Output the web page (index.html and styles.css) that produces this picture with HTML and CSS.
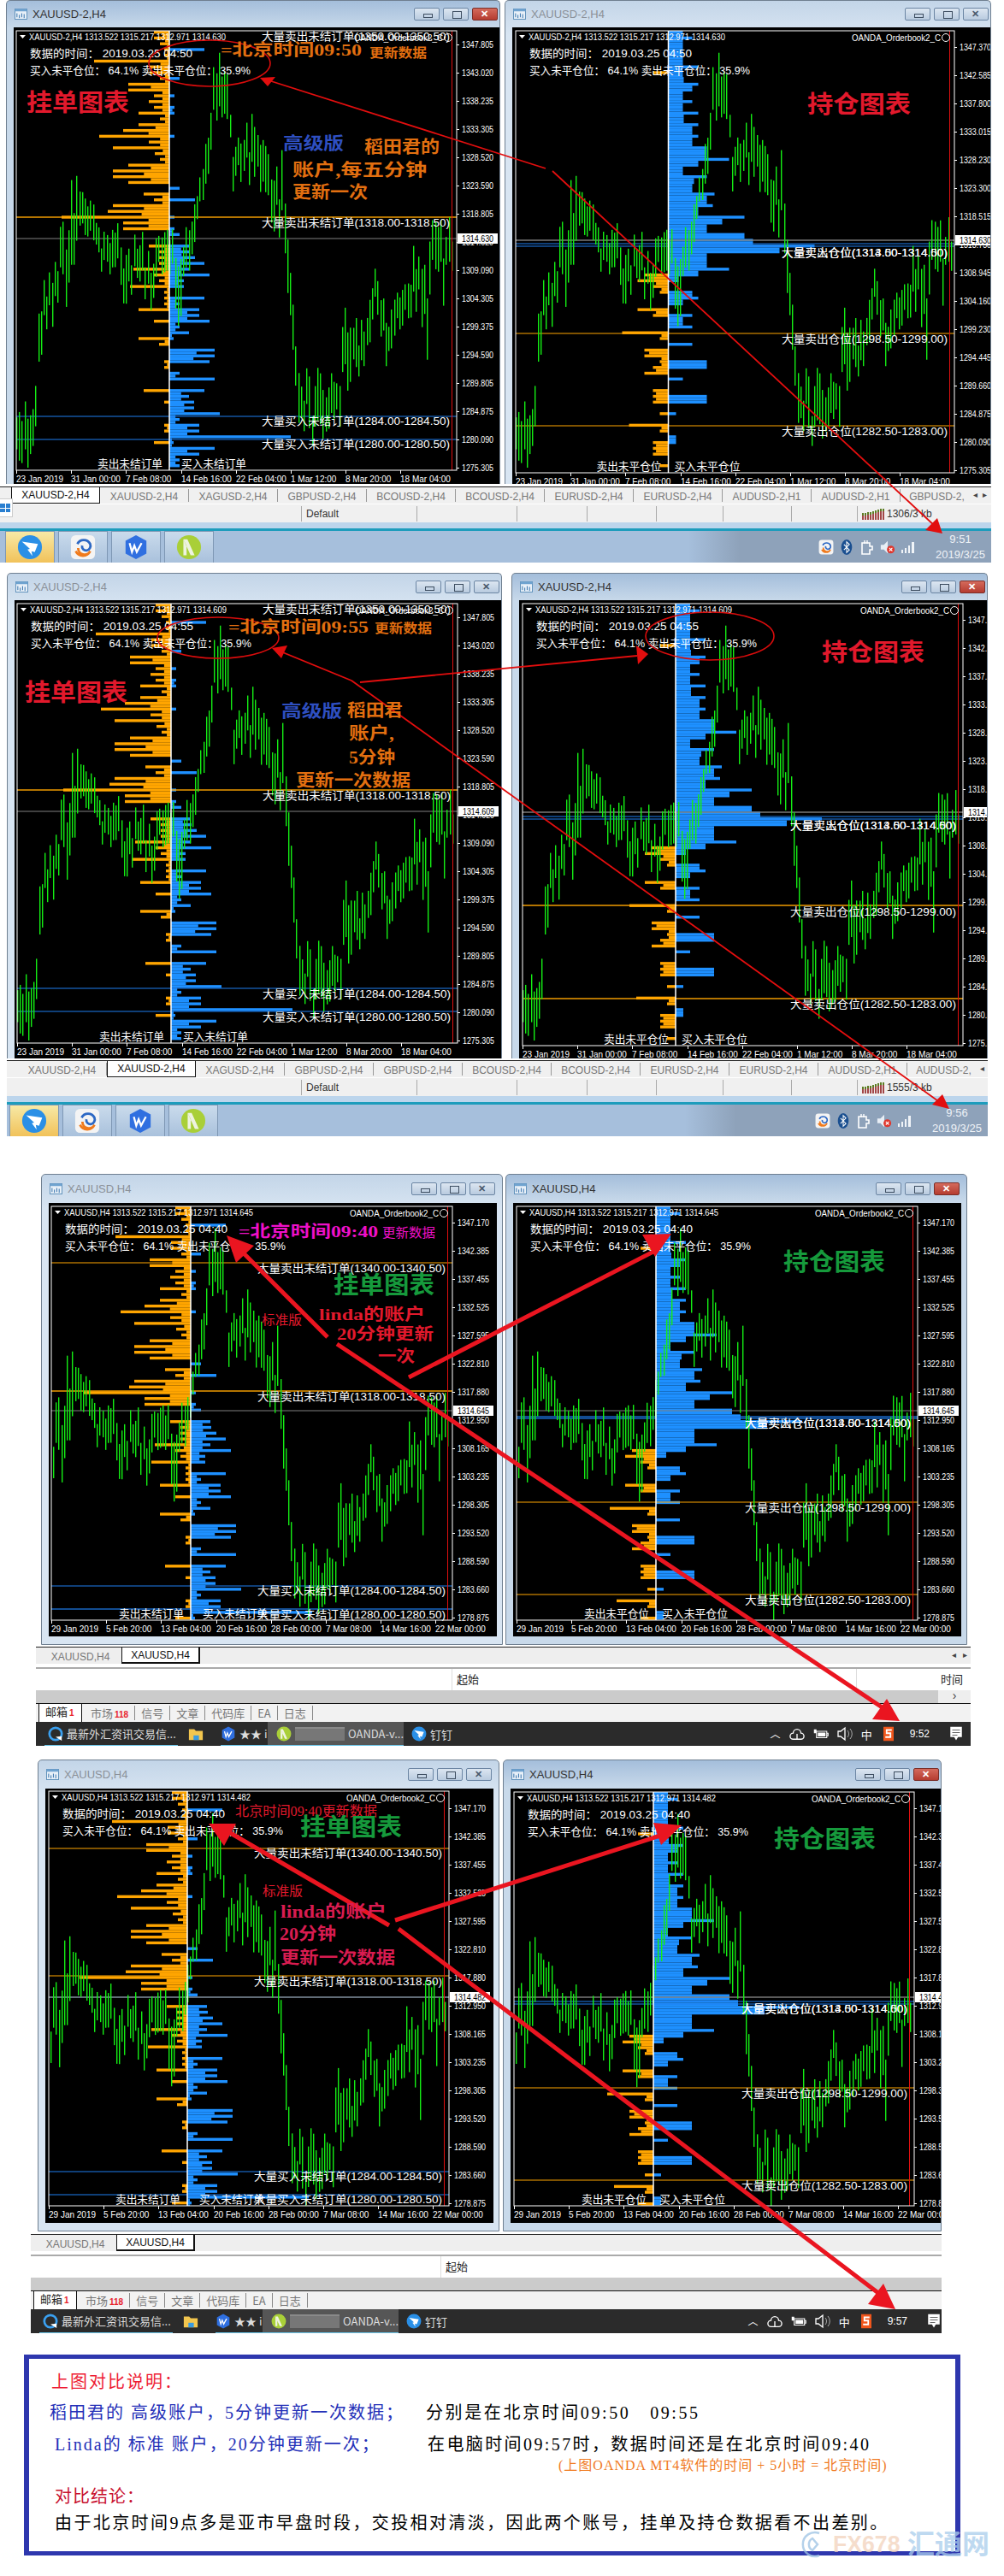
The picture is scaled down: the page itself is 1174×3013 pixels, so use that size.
FILE: index.html
```html
<!DOCTYPE html>
<html lang="zh-CN">
<head>
<meta charset="UTF-8" />
<meta name="viewport" content="width=device-width, initial-scale=1" />
<title>OANDA Orderbook 对比</title>
<link rel="stylesheet" href="styles.css">
</head>
<body>
  <!-- icons used by the taskbars and title bars -->
  <svg class="sprite" aria-hidden="true">
    <symbol id="i-win" viewBox="0 0 16 14">
      <rect x="0.5" y="0.5" width="15" height="13" fill="#e8f0f8" stroke="#5b8db8"/>
      <rect x="0.5" y="0.5" width="15" height="3" fill="#6fa3d0"/>
      <path d="M3 11V6M6 12V8M9 11V6M12 12V7" stroke="#2a6aa8" fill="none"/>
    </symbol>
    <symbol id="i-ding" viewBox="0 0 32 32">
      <circle cx="16" cy="16" r="15" fill="#2a8fe6"/>
      <path d="M6 9l20 3-4 10-4-1 1 6-6-8 3-1z" fill="#fff"/>
    </symbol>
    <symbol id="i-swirl" viewBox="0 0 32 32">
      <rect x="1" y="1" width="30" height="30" rx="6" fill="#f4f4f4"/>
      <path d="M7 21a10 10 0 0 0 18 0 8 8 0 0 1-15-4" fill="none" stroke="#f07a1c" stroke-width="3"/>
      <path d="M9 12a9 9 0 0 1 16 0 6 6 0 0 1-4 8 5 5 0 0 1-6-6" fill="none" stroke="#2d68c4" stroke-width="3"/>
    </symbol>
    <symbol id="i-wps" viewBox="0 0 32 32">
      <path d="M16 1l13 7v16l-13 7-13-7V8z" fill="#2f6fe0"/>
      <path d="M8 11l3 11 3-8 3 8 6-11" fill="none" stroke="#fff" stroke-width="2.4"/>
    </symbol>
    <symbol id="i-n" viewBox="0 0 32 32">
      <circle cx="16" cy="16" r="15" fill="#a9cf38"/>
      <path d="M9 6h5l9 20h-5l-9-20zM9 6v20h4V14z" fill="#eef3e0"/>
    </symbol>
    <symbol id="i-plug" viewBox="0 0 16 18">
      <path d="M2 4h9v4h3v4h-3v5H2z" fill="none" stroke="#fff" stroke-width="1.6"/>
      <path d="M5 1v4M8 1v4" stroke="#fff" stroke-width="1.4"/>
    </symbol>
    <symbol id="i-bt" viewBox="0 0 14 20">
      <ellipse cx="7" cy="10" rx="7" ry="10" fill="#1a4f90"/>
      <path d="M3.5 6.5l7 7-3.5 3.5v-14l3.5 3.5-7 7" fill="none" stroke="#fff" stroke-width="1.2"/>
    </symbol>
    <symbol id="i-mute" viewBox="0 0 20 18">
      <path d="M1 6h4l5-5v16l-5-5H1z" fill="#e8eef5"/>
      <circle cx="14" cy="12" r="5" fill="#e0362c"/>
      <path d="M12 10l4 4M16 10l-4 4" stroke="#fff" stroke-width="1.2"/>
    </symbol>
    <symbol id="i-signal" viewBox="0 0 18 14">
      <path d="M1 10h2v4H1zM5 8h2v6H5zM9 5h2v9H9zM13 1h3v13h-3z" fill="#f0f4f8"/>
    </symbol>
    <symbol id="i-meter" viewBox="0 0 26 14">
      <path d="M1 6v8M4 6v8M7 5v9M10 5v9M13 4v10M16 3v11M19 2v12M22 1v13M25 1v13" stroke="#8f1d1d" stroke-width="1.6"/>
      <path d="M1 6v3M4 6v3M7 5v3M10 5v3M13 4v3M16 3v3M19 2v3M22 1v3M25 1v3" stroke="#4d8c1c" stroke-width="1.6"/>
    </symbol>
    <symbol id="i-folder" viewBox="0 0 20 18">
      <path d="M1 3h7l2 2h9v12H1z" fill="#f3c64e"/>
      <path d="M7 11h7v6H7z" fill="#3a9be0"/>
    </symbol>
    <symbol id="i-qq" viewBox="0 0 20 20">
      <circle cx="10" cy="10" r="8" fill="none" stroke="#3aa0f0" stroke-width="3"/>
      <path d="M10 14l8 5v-6z" fill="#fff"/>
    </symbol>
    <symbol id="i-sogou" viewBox="0 0 20 24">
      <path d="M2 1h16v22H2z" fill="#f0561c"/>
      <path d="M15 6H7v5h6v6H5" fill="none" stroke="#fff" stroke-width="2.4"/>
    </symbol>
    <symbol id="i-tray-note" viewBox="0 0 20 24">
      <path d="M1 1h18v16h-6l-3 5-3-5H1z" fill="#fff"/>
      <path d="M4 6h12M4 10h12M4 14h8" stroke="#333"/>
    </symbol>
    <symbol id="i-cloud" viewBox="0 0 20 18">
      <path d="M5 16a4 4 0 0 1 0-8 5 5 0 0 1 10 0 4 4 0 0 1 0 8zM10 16V9" fill="none" stroke="#fff" stroke-width="1.5"/>
    </symbol>
    <symbol id="i-batt" viewBox="0 0 24 16">
      <path d="M5 4h16v10H5zM21 7h2v4h-2" fill="none" stroke="#fff" stroke-width="1.5"/>
      <path d="M7 6h12v6H7zM1 1h4v6H1z" fill="#fff"/>
    </symbol>
    <symbol id="i-sound" viewBox="0 0 18 18">
      <path d="M1 6h3l5-4v14l-5-4H1z" fill="none" stroke="#fff" stroke-width="1.3"/>
      <path d="M12 5a6 6 0 0 1 0 8M15 3a9 9 0 0 1 0 12" fill="none" stroke="#aaa"/>
    </symbol>
  </svg>

  <!-- 1: 稻田君 09:50 -->
  <section class="screen s1">
    <div class="win-row">
      <div class="win win-left is-active">
        <div class="win-title"><svg class="win-icon"><use href="#i-win"/></svg><span>XAUUSD-2,H4</span>
          <div class="win-btns"><i class="btn btn-min"></i><i class="btn btn-max"></i><i class="btn btn-close"></i></div></div>
        <div class="chart" data-chart="s1o"></div>
      </div>
      <div class="win win-right">
        <div class="win-title"><svg class="win-icon"><use href="#i-win"/></svg><span>XAUUSD-2,H4</span>
          <div class="win-btns"><i class="btn btn-min"></i><i class="btn btn-max"></i><i class="btn btn-x"></i></div></div>
        <div class="chart" data-chart="s1p"></div>
      </div>
    </div>
    <div class="bars">
      <div class="tabs">
        <span class="tab is-current">XAUUSD-2,H4</span><span class="tab">XAUUSD-2,H4</span><span class="tab">XAGUSD-2,H4</span><span class="tab">GBPUSD-2,H4</span><span class="tab">BCOUSD-2,H4</span><span class="tab">BCOUSD-2,H4</span><span class="tab">EURUSD-2,H4</span><span class="tab">EURUSD-2,H4</span><span class="tab">AUDUSD-2,H1</span><span class="tab">AUDUSD-2,H1</span><span class="tab tab-cut">GBPUSD-2,</span><span class="tab-arrows">◂ &nbsp;▸</span>
      </div>
      <div class="status">
        <span class="cell c1"></span><span class="cell c2">Default</span><span class="cell c3"></span><span class="cell c4"></span><span class="cell c5"></span><span class="cell c6"></span><span class="cell c7"></span><span class="cell c8"></span>
        <span class="cell c9"><svg class="meter"><use href="#i-meter"/></svg>1306/3 kb</span>
      </div>
      <div class="strip"></div>
      <div class="taskbar">
        <div class="task-btn is-hot"><svg><use href="#i-ding"/></svg></div>
        <div class="task-btn"><svg><use href="#i-swirl"/></svg></div>
        <div class="task-btn"><svg><use href="#i-wps"/></svg></div>
        <div class="task-btn"><svg><use href="#i-n"/></svg></div>
        <div class="tray">
          <svg class="t20"><use href="#i-swirl"/></svg>
          <svg class="t20"><use href="#i-bt"/></svg>
          <svg class="t20"><use href="#i-plug"/></svg>
          <svg class="t20"><use href="#i-mute"/></svg>
          <svg class="t20"><use href="#i-signal"/></svg>
          <div class="clock"><span>9:51</span><span>2019/3/25</span></div>
        </div>
      </div>
    </div>
    <div class="corner-app"><i></i><i></i><i></i><i></i></div>
    <svg class="marks" width="1174" height="670">
      <ellipse class="ring" cx="245" cy="74" rx="71" ry="27"/>
      <path class="thin" d="M638 197L314 94M646 200L1094 616"/>
      <polygon class="head" points="304,91 322,90 313,101"/>
      <polygon class="head" points="1102,624 1082,620 1096,606"/>
      <text class="tx bold orange" x="258" y="58" textLength="165" lengthAdjust="spacingAndGlyphs">=北京时间09:50</text>
      <text class="tx bold orange small" x="432" y="62" textLength="67" lengthAdjust="spacingAndGlyphs">更新数据</text>
      <text class="tx big red-t" x="31" y="120" textLength="120" lengthAdjust="spacingAndGlyphs">挂单图表</text>
      <text class="tx mid blue-t" x="331" y="168" textLength="71" lengthAdjust="spacingAndGlyphs">高级版</text>
      <text class="tx mid orange" x="426" y="172" textLength="88" lengthAdjust="spacingAndGlyphs">稻田君的</text>
      <text class="tx mid orange" x="342" y="199" textLength="157" lengthAdjust="spacingAndGlyphs">账户,每五分钟</text>
      <text class="tx mid orange" x="342" y="225" textLength="88" lengthAdjust="spacingAndGlyphs">更新一次</text>
      <text class="tx big red-t" x="944" y="122" textLength="121" lengthAdjust="spacingAndGlyphs">持仓图表</text>
    </svg>
  </section>

  <!-- 2: 稻田君 09:55 -->
  <section class="screen s2">
    <div class="win-row">
      <div class="win win-left">
        <div class="win-title"><svg class="win-icon"><use href="#i-win"/></svg><span>XAUUSD-2,H4</span>
          <div class="win-btns"><i class="btn btn-min"></i><i class="btn btn-max"></i><i class="btn btn-x"></i></div></div>
        <div class="chart" data-chart="s2o"></div>
      </div>
      <div class="win win-right is-active">
        <div class="win-title"><svg class="win-icon"><use href="#i-win"/></svg><span>XAUUSD-2,H4</span>
          <div class="win-btns"><i class="btn btn-min"></i><i class="btn btn-max"></i><i class="btn btn-close"></i></div></div>
        <div class="chart" data-chart="s2p"></div>
      </div>
    </div>
    <div class="bars">
      <div class="tabs">
        <span class="tab">XAUUSD-2,H4</span><span class="tab is-current">XAUUSD-2,H4</span><span class="tab">XAGUSD-2,H4</span><span class="tab">GBPUSD-2,H4</span><span class="tab">GBPUSD-2,H4</span><span class="tab">BCOUSD-2,H4</span><span class="tab">BCOUSD-2,H4</span><span class="tab">EURUSD-2,H4</span><span class="tab">EURUSD-2,H4</span><span class="tab">AUDUSD-2,H1</span><span class="tab tab-cut">AUDUSD-2,</span><span class="tab-arrows">◂ &nbsp;▸</span>
      </div>
      <div class="status">
        <span class="cell c1"></span><span class="cell c2">Default</span><span class="cell c3"></span><span class="cell c4"></span><span class="cell c5"></span><span class="cell c6"></span><span class="cell c7"></span><span class="cell c8"></span>
        <span class="cell c9"><svg class="meter"><use href="#i-meter"/></svg>1555/3 kb</span>
      </div>
      <div class="strip"></div>
      <div class="taskbar">
        <div class="task-btn is-hot"><svg><use href="#i-ding"/></svg></div>
        <div class="task-btn"><svg><use href="#i-swirl"/></svg></div>
        <div class="task-btn"><svg><use href="#i-wps"/></svg></div>
        <div class="task-btn"><svg><use href="#i-n"/></svg></div>
        <div class="tray">
          <svg class="t20"><use href="#i-swirl"/></svg>
          <svg class="t20"><use href="#i-bt"/></svg>
          <svg class="t20"><use href="#i-plug"/></svg>
          <svg class="t20"><use href="#i-mute"/></svg>
          <svg class="t20"><use href="#i-signal"/></svg>
          <div class="clock"><span>9:56</span><span>2019/3/25</span></div>
        </div>
      </div>
    </div>
    <svg class="marks" width="1174" height="703">
      <ellipse class="ring" cx="255" cy="76" rx="71" ry="24"/>
      <ellipse class="ring" cx="830" cy="74" rx="75" ry="28"/>
      <path class="thin" d="M411 126L328 92M411 126L1100 620M421 128L745 97"/>
      <polygon class="head" points="318,88 336,85 329,100"/>
      <polygon class="head" points="758,95 744,85 746,107"/>
      <polygon class="head" points="1110,627 1090,622 1102,610"/>
      <text class="tx bold orange" x="267" y="63" textLength="164" lengthAdjust="spacingAndGlyphs">=北京时间09:55</text>
      <text class="tx bold orange small" x="438" y="65" textLength="67" lengthAdjust="spacingAndGlyphs">更新数据</text>
      <text class="tx big red-t" x="29" y="140" textLength="120" lengthAdjust="spacingAndGlyphs">挂单图表</text>
      <text class="tx mid blue-t" x="329" y="162" textLength="71" lengthAdjust="spacingAndGlyphs">高级版</text>
      <text class="tx mid orange" x="406" y="161" textLength="65" lengthAdjust="spacingAndGlyphs">稻田君</text>
      <text class="tx mid orange" x="408" y="188" textLength="53" lengthAdjust="spacingAndGlyphs">账户,</text>
      <text class="tx mid orange" x="408" y="216" textLength="54" lengthAdjust="spacingAndGlyphs">5分钟</text>
      <text class="tx mid orange" x="346" y="243" textLength="134" lengthAdjust="spacingAndGlyphs">更新一次数据</text>
      <text class="tx big red-t" x="961" y="93" textLength="120" lengthAdjust="spacingAndGlyphs">持仓图表</text>
    </svg>
  </section>

  <!-- 3: linda 09:52 -->
  <section class="screen s3">
    <div class="win-row">
      <div class="win win-left">
        <div class="win-title"><svg class="win-icon"><use href="#i-win"/></svg><span>XAUUSD,H4</span>
          <div class="win-btns"><i class="btn btn-min"></i><i class="btn btn-max"></i><i class="btn btn-x"></i></div></div>
        <div class="chart" data-chart="s3o"></div>
      </div>
      <div class="win win-right is-active">
        <div class="win-title"><svg class="win-icon"><use href="#i-win"/></svg><span>XAUUSD,H4</span>
          <div class="win-btns"><i class="btn btn-min"></i><i class="btn btn-max"></i><i class="btn btn-close"></i></div></div>
        <div class="chart" data-chart="s3p"></div>
      </div>
    </div>
    <div class="bars">
      <div class="tabs tabs-short">
        <span class="tab">XAUUSD,H4</span><span class="tab is-current">XAUUSD,H4</span><span class="tab-arrows">◂ &nbsp;&nbsp;▸</span>
      </div>
      <div class="grid-head"><span class="gh-a"></span><span class="gh-b">起始</span><span class="gh-c">时间</span></div>
      <div class="scroll"><span class="scroll-end">›</span></div>
      <div class="panel-tabs">
        <span class="ptab is-current">邮箱<b>1</b></span><span class="ptab">市场<b>118</b></span><span class="ptab">信号</span><span class="ptab">文章</span><span class="ptab">代码库</span><span class="ptab">EA</span><span class="ptab">日志</span>
      </div>
      <div class="darkbar">
        <span class="dk dk-news"><svg><use href="#i-qq"/></svg>最新外汇资讯交易信...</span>
        <span class="dk dk-folder"><svg><use href="#i-folder"/></svg></span>
        <span class="dk dk-star"><svg><use href="#i-wps"/></svg>★★ i</span>
        <span class="dk dk-oanda"><svg><use href="#i-n"/></svg><i class="blur"></i>OANDA-v...</span>
        <span class="dk dk-ding"><svg><use href="#i-ding"/></svg>钉钉</span>
        <div class="dk-tray">
          <span class="caret">︿</span>
          <svg><use href="#i-cloud"/></svg>
          <svg><use href="#i-batt"/></svg>
          <svg><use href="#i-sound"/></svg>
          <span>中</span>
          <svg><use href="#i-sogou"/></svg>
          <span class="dk-time">9:52</span>
          <svg><use href="#i-tray-note"/></svg>
        </div>
      </div>
    </div>
    <svg class="marks" width="1174" height="685">
      <path class="thick" d="M383 191L272 80M394 199L1033 625M478 238L766 90"/>
      <polygon class="head-t" points="265,72 297,84 276,104"/>
      <polygon class="head-t" points="751,71 785,70 766,97"/>
      <polygon class="head-t" points="1037,614 1052,640 1020,638"/>
      <text class="tx bold magenta" x="279" y="67" textLength="163" lengthAdjust="spacingAndGlyphs">=北京时间09:40</text>
      <text class="tx magenta small" x="447" y="69" textLength="62" lengthAdjust="spacingAndGlyphs">更新数据</text>
      <text class="tx big green-t" x="390" y="130" textLength="118" lengthAdjust="spacingAndGlyphs">挂单图表</text>
      <text class="tx red-t small" x="306" y="171" textLength="47" lengthAdjust="spacingAndGlyphs">标准版</text>
      <text class="tx bold red-t" x="373" y="164" textLength="124" lengthAdjust="spacingAndGlyphs">linda的账户</text>
      <text class="tx bold red-t" x="394" y="187" textLength="113" lengthAdjust="spacingAndGlyphs">20分钟更新</text>
      <text class="tx bold red-t" x="442" y="213" textLength="43" lengthAdjust="spacingAndGlyphs">一次</text>
      <text class="tx big green-t" x="916" y="103" textLength="119" lengthAdjust="spacingAndGlyphs">持仓图表</text>
    </svg>
  </section>

  <!-- 4: linda 09:57 -->
  <section class="screen s4">
    <div class="win-row">
      <div class="win win-left">
        <div class="win-title"><svg class="win-icon"><use href="#i-win"/></svg><span>XAUUSD,H4</span>
          <div class="win-btns"><i class="btn btn-min"></i><i class="btn btn-max"></i><i class="btn btn-x"></i></div></div>
        <div class="chart" data-chart="s4o"></div>
      </div>
      <div class="win win-right is-active">
        <div class="win-title"><svg class="win-icon"><use href="#i-win"/></svg><span>XAUUSD,H4</span>
          <div class="win-btns"><i class="btn btn-min"></i><i class="btn btn-max"></i><i class="btn btn-close"></i></div></div>
        <div class="chart" data-chart="s4p"></div>
      </div>
    </div>
    <div class="bars">
      <div class="tabs tabs-short">
        <span class="tab">XAUUSD,H4</span><span class="tab is-current">XAUUSD,H4</span>
      </div>
      <div class="grid-head"><span class="gh-a"></span><span class="gh-b">起始</span></div>
      <div class="scroll"></div>
      <div class="panel-tabs">
        <span class="ptab is-current">邮箱<b>1</b></span><span class="ptab">市场<b>118</b></span><span class="ptab">信号</span><span class="ptab">文章</span><span class="ptab">代码库</span><span class="ptab">EA</span><span class="ptab">日志</span>
      </div>
      <div class="darkbar">
        <span class="dk dk-news"><svg><use href="#i-qq"/></svg>最新外汇资讯交易信...</span>
        <span class="dk dk-folder"><svg><use href="#i-folder"/></svg></span>
        <span class="dk dk-star"><svg><use href="#i-wps"/></svg>★★ i</span>
        <span class="dk dk-oanda"><svg><use href="#i-n"/></svg><i class="blur"></i>OANDA-v...</span>
        <span class="dk dk-ding"><svg><use href="#i-ding"/></svg>钉钉</span>
        <div class="dk-tray">
          <span class="caret">︿</span>
          <svg><use href="#i-cloud"/></svg>
          <svg><use href="#i-batt"/></svg>
          <svg><use href="#i-sound"/></svg>
          <span>中</span>
          <svg><use href="#i-sogou"/></svg>
          <span class="dk-time">9:57</span>
          <svg><use href="#i-tray-note"/></svg>
        </div>
      </div>
    </div>
    <svg class="marks" width="1174" height="680">
      <path class="thick" d="M455 194L266 84M466 198L1035 630M462 188L775 88"/>
      <polygon class="head-t" points="244,75 276,75 262,101"/>
      <polygon class="head-t" points="764,74 797,77 773,100"/>
      <polygon class="head-t" points="1033,613 1047,643 1015,637"/>
      <text class="tx red-t note" x="275" y="60" textLength="166" lengthAdjust="spacingAndGlyphs">北京时间09:40更新数据</text>
      <text class="tx big green-t" x="351" y="79" textLength="119" lengthAdjust="spacingAndGlyphs">挂单图表</text>
      <text class="tx red-t small" x="307" y="154" textLength="47" lengthAdjust="spacingAndGlyphs">标准版</text>
      <text class="tx mid crimson" x="328" y="178" textLength="124" lengthAdjust="spacingAndGlyphs">linda的账户</text>
      <text class="tx mid crimson" x="327" y="204" textLength="66" lengthAdjust="spacingAndGlyphs">20分钟</text>
      <text class="tx mid crimson" x="328" y="232" textLength="134" lengthAdjust="spacingAndGlyphs">更新一次数据</text>
      <text class="tx big green-t" x="905" y="93" textLength="119" lengthAdjust="spacingAndGlyphs">持仓图表</text>
    </svg>
  </section>

  <!-- summary box -->
  <section class="summary">
    <div class="line l1 red-line">上图对比说明&#xFF1A;</div>
    <div class="line l2"><span class="col-a blue-line">稻田君的 高级账户&#xFF0C;5分钟更新一次数据&#xFF1B;</span><span class="col-r">分别是在北京时间09:50&nbsp;&nbsp;&nbsp;09:55</span></div>
    <div class="line l3"><span class="col-b blue-line">Linda的 标准 账户&#xFF0C;20分钟更新一次&#xFF1B;</span><span class="col-s">在电脑时间09:57时&#xFF0C;数据时间还是在北京时间09:40</span></div>
    <div class="line l4">(上图OANDA MT4软件的时间 + 5小时 = 北京时间)</div>
    <div class="line l5">对比结论&#xFF1A;</div>
    <div class="line l6">由于北京时间9点多是亚市早盘时段&#xFF0C;交投相对清淡&#xFF0C;因此两个账号&#xFF0C;挂单及持仓数据看不出差别。</div>
    <div class="watermark">
      <svg width="30" height="32" viewBox="0 0 30 32"><path d="M22 3a14 14 0 1 0 0 26M14 9a8 8 0 0 0 0 14l6-7z" fill="none" stroke="#9cc2e4" stroke-width="2.5"/></svg>
      <span class="wm-fx">FX678</span><span class="wm-cn">汇通网</span>
    </div>
  </section>

  <script src="app.js"></script>
</body>
</html>
```

FILE: styles.css
```css
/* Reset */
* {
  box-sizing: border-box;
}
body {
  margin: 0;
  width: 1174px;
  height: 3013px;
  overflow: hidden;
  background: #fff;
  font-family: "Liberation Sans", "Noto Sans CJK SC", sans-serif;
}
.sprite {
  position: absolute;
  width: 0;
  height: 0;
}

/* Screens */
.screen {
  position: relative;
  width: 1174px;
}
.s1 { height: 670px; }
.s2 { height: 703px; }
.s3 { height: 685px; }
.s4 { height: 696px; }

.win-row {
  display: flex;
}
.s1 .win-row { height: 566px; padding-left: 7px; }
.s2 .win-row { height: 568px; padding-left: 8px; }
.s3 .win-row { height: 551px; padding-left: 48px; }
.s4 .win-row { height: 552px; padding-left: 44px; }

.s1 .win-left { width: 578px; }
.s1 .win-right { width: 569px; margin-left: 5px; }
.s2 .win-left { width: 579px; }
.s2 .win-right { width: 557px; margin-left: 11px; }
.s3 .win-left { width: 540px; }
.s3 .win-right { width: 540px; margin-left: 3px; }
.s4 .win-left { width: 540px; }
.s4 .win-right { width: 513px; margin-left: 4px; }

/* Chart windows */
.win {
  display: flex;
  flex-direction: column;
  background: linear-gradient(#c3d5e8 0%, #d8e5f2 40px, #d8e5f2 100%);
  border: 1px solid #6f7f90;
  border-bottom: none;
  border-radius: 5px 5px 0 0;
  padding: 0 0 0 8px;
  overflow: hidden;
}
.s3 .win, .s4 .win {
  padding: 0 6px 9px 8px;
  border-bottom: 1px solid #6f7f90;
}
.s4 .win-right { padding-right: 0; }
.s1 .win, .s2 .win { padding-right: 0; }
.win.is-active {
  background: linear-gradient(#a4bedb 0%, #c8d9ea 32px, #c8d9ea 100%);
}
.win-title {
  flex: none;
  height: 31px;
  display: flex;
  align-items: center;
  gap: 6px;
  font-size: 13px;
  color: #8a9098;
}
.is-active .win-title {
  color: #333;
}
.s3 .win-title, .s4 .win-title { height: 33px; }
.win-icon {
  width: 15px;
  height: 13px;
  margin-left: 1px;
}
.win-btns {
  margin-left: auto;
  display: flex;
  gap: 4px;
  padding-right: 2px;
}
.btn {
  position: relative;
  display: block;
  width: 30px;
  height: 15px;
  border: 1px solid #6b85a3;
  border-radius: 2px;
  background: linear-gradient(#dce6f1, #b9cbdf);
}
.btn::after {
  content: "";
  position: absolute;
  left: 10px;
  top: 6px;
  width: 9px;
  height: 3px;
  border: 1px solid #3d4d60;
}
.btn-max::after {
  top: 3px;
  height: 7px;
}
.btn-close, .btn-x {
  font-style: normal;
}
.btn-close {
  background: linear-gradient(#d46a5c, #b53c30);
  border-color: #7a2e28;
}
.btn-close::after, .btn-x::after {
  content: "✕";
  border: none;
  left: 9px;
  top: 0;
  width: auto;
  height: auto;
  font-size: 11px;
  line-height: 13px;
  font-weight: 700;
  color: #fff;
}
.btn-x::after { color: #4a5a6c; }

.chart {
  flex: 1;
  min-height: 0;
  background: #000;
  overflow: hidden;
}
.chart svg {
  display: block;
}

/* Text drawn in the chart */
.ct { fill: #fff; font-size: 10px; font-family: "Liberation Sans", "Noto Sans CJK SC", sans-serif; dominant-baseline: central; }
.ct-cn { fill: #fff; font-size: 13px; font-family: "Liberation Sans", "Noto Sans CJK SC", sans-serif; dominant-baseline: central; }
.ct-box { fill: #000; font-size: 10px; font-family: "Liberation Sans", sans-serif; dominant-baseline: central; }

/* Bottom bars */
.bars { font-size: 12px; }
.s1 .bars { width: 1159px; padding-top: 3px; }
.s2 .bars { width: 1147px; margin-left: 8px; padding-top: 2px; }
.s3 .bars { width: 1093px; margin-left: 42px; padding-top: 2px; }
.s4 .bars { width: 1065px; margin-left: 36px; padding-top: 3px; }

.tabs {
  height: 20px;
  display: flex;
  align-items: stretch;
  padding-left: 13px;
  background: #f0f0f0;
  border-top: 1px solid #222;
  color: #777;
  overflow: hidden;
}
.tab {
  flex: none;
  width: 104px;
  text-align: center;
  line-height: 18px;
  margin: 2px 0;
  border-right: 1px solid #999;
}
.tab.is-current {
  margin: 0;
  background: #fff;
  color: #111;
  border: 1px solid #111;
  border-top: none;
  line-height: 19px;
}
.tab-cut { border: none; width: 85px; }
.tab-arrows {
  margin-left: auto;
  padding-right: 5px;
  line-height: 18px;
  color: #444;
  font-size: 10px;
}
.tabs-short { padding-left: 4px; background: #eee; }
.tabs-short .tab { width: 96px; border-right: none; }
.tabs-short .tab.is-current { width: 92px; border-left: 1px solid #111; border-right: 2px solid #111; border-bottom: 2px solid #111; }
.s3 .tabs-short .tab-arrows { padding-right: 4px; }

.status {
  height: 21px;
  margin-top: 1px;
  display: flex;
  background: #f0f0f0;
  color: #333;
  font-size: 12px;
}
.cell {
  flex: none;
  height: 18px;
  margin-top: 2px;
  border-left: 1px solid #aaa;
  line-height: 18px;
  padding-left: 5px;
}
.c1 { width: 352px; border: none; }
.c2 { width: 135px; }
.c3 { width: 117px; }
.c4 { width: 82px; }
.c5 { width: 81px; }
.c6 { width: 78px; }
.c7 { width: 80px; }
.c8 { width: 77px; }
.c9 { flex: 1; display: flex; align-items: center; gap: 3px; }
.meter { width: 26px; height: 14px; }
.s2 .c1 { width: 344px; }

.strip {
  height: 10px;
  background: linear-gradient(#bcd5ec 0, #bcd5ec 7px, #1d9cbc 7px);
}
.taskbar {
  height: 37px;
  display: flex;
  background: #a6bfdc;
  padding-left: 6px;
  gap: 4px;
}
.s2 .taskbar { height: 37px; padding-left: 3px; }
.task-btn {
  width: 58px;
  height: 37px;
  display: flex;
  align-items: center;
  justify-content: center;
  background: linear-gradient(#cadbec, #a9c1dc);
  border: 1px solid #7e97b4;
  border-bottom: none;
}
.task-btn svg { width: 30px; height: 30px; }
.task-btn.is-hot { background: linear-gradient(#f7e9a6, #f1c25a); }
.tray {
  margin-left: auto;
  width: 354px;
  display: flex;
  align-items: center;
  justify-content: flex-end;
  gap: 6px;
  background: linear-gradient(90deg, #a6bfdc 0, #8ea2ba 60px);
  color: #eef2f7;
  font-size: 13px;
}
.t20 { width: 18px; height: 18px; }
.clock {
  width: 72px;
  margin-left: 10px;
  display: flex;
  flex-direction: column;
  align-items: center;
  gap: 3px;
  line-height: 15px;
}

.corner-app {
  position: absolute;
  left: 0;
  top: 583px;
  width: 15px;
  height: 22px;
  padding: 5px 2px 5px 0;
  background: #fff;
  border: 1px solid #ccc;
  border-left: none;
  display: grid;
  grid-template-columns: 1fr 1fr;
  gap: 1px;
}
.corner-app i { background: #2a7fd0; }

/* Terminal panels (lower two screens) */
.grid-head {
  height: 27px;
  margin-top: 4px;
  display: flex;
  background: #fff;
  border-top: 2px solid #aaa;
  font: 13px "Noto Sans CJK SC", sans-serif;
  color: #222;
}
.gh-a { width: 486px; flex: none; }
.gh-b { width: 473px; flex: none; border-left: 1px solid #ddd; padding-left: 5px; line-height: 24px; }
.gh-c { flex: 1; border-left: 1px solid #ddd; text-align: right; line-height: 24px; padding-right: 9px; }
.s4 .gh-a { width: 479px; }
.scroll {
  height: 15px;
  background: #cbcbcb;
  text-align: right;
}
.scroll-end {
  display: inline-block;
  width: 38px;
  height: 15px;
  background: #eee;
  text-align: center;
  line-height: 13px;
  color: #444;
  font-size: 14px;
}
.panel-tabs {
  height: 22px;
  display: flex;
  background: #f2f2f2;
  border-top: 1px solid #111;
  color: #777;
  font: 13px "Noto Sans CJK SC", sans-serif;
}
.ptab {
  flex: none;
  padding: 0 7px;
  margin: 2px 0;
  line-height: 17px;
  border-right: 1px solid #888;
  white-space: nowrap;
}
.ptab b {
  font: 700 10px "Liberation Sans", sans-serif;
  color: #e8232c;
  margin-left: 2px;
}
.ptab.is-current {
  margin: 0 3px 0 3px;
  width: 51px;
  background: #fff;
  color: #222;
  border-left: 1px solid #111;
  border-right: 1px solid #111;
}
.darkbar {
  height: 28px;
  display: flex;
  align-items: center;
  background: #2b2b2b;
  color: #ddd;
  font: 13px "Noto Sans CJK SC", sans-serif;
  white-space: nowrap;
}
.dk {
  flex: none;
  height: 28px;
  display: flex;
  align-items: center;
  gap: 4px;
  border-bottom: 1px solid #6cc6e8;
}
.dk svg { width: 18px; height: 18px; flex: none; }
.dk-news { width: 156px; margin-left: 10px; padding-left: 4px; }
.dk-folder { width: 30px; margin-left: 12px; border: none; }
.dk-star { width: 55px; margin-left: 8px; overflow: hidden; }
.dk-oanda { width: 159px; background: #565656; padding-left: 10px; color: #ddd; }
.blur { display: block; width: 58px; height: 16px; background: #777; border-top: 2px solid #8a8a8a; flex: none; }
.dk-ding { width: 50px; margin-left: 9px; border: none; }
.dk-tray {
  margin-left: auto;
  display: flex;
  align-items: center;
  gap: 10px;
  padding-right: 8px;
  color: #fff;
}
.dk-tray svg { width: 18px; height: 18px; }
.caret { font-size: 12px; line-height: 12px; }
.dk-time { font: 12px "Liberation Sans", sans-serif; margin: 0 12px 0 6px; }
.s4 .dk-tray { padding-right: 0; }

/* Annotations over the screens */
.marks {
  position: absolute;
  left: 0;
  top: 0;
  pointer-events: none;
  overflow: visible;
}
.ring { fill: none; stroke: #d80c0c; stroke-width: 1.6; }
.thin { fill: none; stroke: #e20e0e; stroke-width: 1.8; }
.thick { fill: none; stroke: #ea1520; stroke-width: 5; }
.head { fill: #e20e0e; }
.head-t { fill: #ea1520; }
.tx {
  font-family: "Liberation Serif", "Noto Sans CJK SC", serif;
  font-size: 19px;
  dominant-baseline: central;
}
.tx.bold { font-weight: 700; }
.tx.small { font-size: 15px; }
.tx.note { font-size: 16px; }
.tx.mid { font-size: 20px; font-weight: 700; }
.tx.big { font-size: 28px; font-weight: 700; }
.orange { fill: #e26f10; }
.red-t { fill: #e2192c; }
.blue-t { fill: #2e4fc0; }
.magenta { fill: #ee10c8; }
.green-t { fill: #169a3c; }
.crimson { fill: #d81c50; }

/* Summary box */
.summary {
  position: relative;
  width: 1095px;
  height: 235px;
  margin-left: 28px;
  border: 5px solid #2e37ae;
  border-width: 5px 6px;
  padding: 14px 0 0 26px;
  font-family: "Liberation Serif", "Noto Sans CJK SC", serif;
  font-size: 20px;
  color: #000;
}
.line {
  display: flex;
  white-space: nowrap;
  height: 26px;
  line-height: 26px;
}
.l1 { letter-spacing: 2px; }
.l2 { margin-top: 10px; margin-left: -2px; letter-spacing: 2px; }
.l3 { margin-top: 11px; margin-left: 4px; letter-spacing: 2px; }
.l4 { margin-top: 2px; margin-left: 593px; height: 20px; line-height: 20px; font-size: 16px; letter-spacing: 1px; color: #f07a1e; }
.l5 { margin-top: 13px; margin-left: 4px; letter-spacing: 1px; color: #c8102e; }
.l6 { margin-top: 5px; margin-left: 4px; letter-spacing: 2.4px; }
.col-r { letter-spacing: 2.6px; }
.col-s { letter-spacing: 2.4px; }
.red-line { color: #ee1c34; }
.blue-line { color: #2430b8; }
.col-a { display: block; width: 440px; flex: none; }
.col-b { display: block; width: 436px; flex: none; }

.watermark {
  position: absolute;
  right: -40px;
  bottom: -9px;
  display: flex;
  align-items: center;
  gap: 6px;
  font: 700 30px "Liberation Sans", "Noto Sans CJK SC", sans-serif;
  line-height: 34px;
  opacity: 0.75;
}
.wm-fx { color: #f2d2bc; font-size: 28px; transform: scaleX(0.95); }
.wm-cn { color: #a9cdec; font-size: 32px; }
```

FILE: app.js
```js
// Draws the MT4 chart panels. Everything is in px relative to the plot box.

const GREEN_PATH = [
  [0,442,486],[11,455,503],[23,399,464],[27,321,364],[46,269,312],[63,186,282],[73,165,225],
  [90,212,243],[98,243,282],[115,234,269],[126,269,321],[134,265,295],[145,239,278],[157,282,317],
  [168,247,282],[180,247,291],[191,269,330],[207,208,243],[214,169,200],[226,121,173],[233,26,78],
  [241,30,91],[249,91,126],[254,156,204],[264,117,156],[276,121,169],[287,139,182],[300,165,221],
  [310,160,243],[318,243,304],[325,347,408],[333,412,451],[348,416,473],[364,416,455],[379,399,442],
  [383,338,399],[394,356,408],[406,347,382],[417,278,325],[429,330,373],[436,356,395],[444,299,338],
  [455,299,338],[467,269,312],[480,278,351],[488,204,247],[494,243,321],[509,239,269]
];

// row index -> bar length
const ORDER_SELL = {0:18,1:18,2:11,3:6,4:6,5:88,6:23,7:23,8:11,9:48,10:48,11:18,12:24,13:18,14:36,15:11,16:36,17:54,18:82,19:24,20:66,21:17,22:11,23:48,24:66,25:66,26:48,28:30,29:18,30:66,31:72,32:126,33:54,34:54,37:24,38:12,39:12,40:12,41:42,42:18,43:12,44:46,45:6,46:6,47:6,48:36,50:18,53:36,54:12,57:6,58:6,62:30,64:6,68:6,69:6,71:18};
const ORDER_BUY = {3:41,8:12,11:6,13:6,14:6,18:6,27:12,29:30,32:6,34:6,35:12,37:23,38:24,39:30,40:41,41:23,42:47,43:17,44:17,46:41,47:12,48:35,49:35,50:47,51:12,52:23,53:5,55:53,56:53,57:47,59:12,60:53,62:41,63:23,64:29,65:29,66:59,67:12,68:35,69:35,70:142,71:5,72:53,73:35,74:12,75:12};
const POS_BUY = {0:17,1:28,2:17,3:17,4:17,5:17,6:35,7:17,8:18,9:35,10:28,11:17,12:28,13:17,14:35,15:18,16:35,17:28,18:35,19:28,20:45,21:45,22:71,23:35,24:17,25:45,26:30,27:28,28:54,29:45,30:52,31:35,32:89,33:63,34:45,35:89,36:99,37:171,38:130,39:45,40:45,41:71,42:35,43:12,45:28,46:35,47:17,49:28,50:17,51:28,54:28,57:45,58:45,60:17,63:45,64:45,66:9,70:9,71:9};
const POS_SELL = {7:18,42:28,43:36,44:18,45:10,48:36,49:18,52:54,53:10,55:28,56:28,57:10,58:18,59:28,62:18,63:18,64:18,66:10,68:46,69:10,71:18,72:18,73:18,75:10};

const AXIS_A = ['1347.805','1343.020','1338.235','1333.305','1328.520','1323.590','1318.805','1314.020','1309.090','1304.305','1299.375','1294.590','1289.805','1284.875','1280.090','1275.305'];
const AXIS_A2 = ['1347.370','1342.585','1337.800','1333.015','1328.230','1323.300','1318.515','1313.730','1308.945','1304.160','1299.230','1294.445','1289.660','1284.875','1280.090','1275.305'];
const AXIS_B = ['1347.170','1342.385','1337.455','1332.525','1327.595','1322.810','1317.880','1312.950','1308.165','1303.235','1298.305','1293.520','1288.590','1283.660','1278.875'];
const DATES_A = ['23 Jan 2019','31 Jan 00:00','7 Feb 08:00','14 Feb 16:00','22 Feb 04:00','1 Mar 12:00','8 Mar 20:00','18 Mar 04:00'];
const DATES_B = ['29 Jan 2019','5 Feb 20:00','13 Feb 04:00','20 Feb 16:00','28 Feb 00:00','7 Mar 08:00','14 Mar 16:00','22 Mar 00:00'];

const SVG_NS = 'http://www.w3.org/2000/svg';

const CHARTS = {
  s1o: {kind:'order', px:3, py:4, w:515, h:514, center:179, shift:0, sym:'XAUUSD-2,H4', last:'1314.630', time:'04:50', axis:AXIS_A, dates:DATES_A, first:16,
    lines:[[218,'#ffa500',1.4],[243,'#808080',1],[451,'#1e7ff0',1],[478,'#1e7ff0',1]],
    labels:[[6,'大量卖出未结订单(1350.00-1350.50)'],[224,'大量卖出未结订单(1318.00-1318.50)'],[456,'大量买入未结订单(1284.00-1284.50)'],[483,'大量买入未结订单(1280.00-1280.50)']]},
  s1p: {kind:'pos', px:4, py:4, w:513, h:517, center:178.5, shift:0, sym:'XAUUSD-2,H4', last:'1314.630', time:'04:50', axis:AXIS_A2, dates:DATES_A, first:19,
    lines:[[245,'#808080',1.4],[249,'#1e7ff0',1],[252,'#1e7ff0',1],[354,'#ffa500',1],[462,'#ffa500',1]],
    labels:[[259,'大量买入仓位(1313.50-1314.00)'],[259,'大量卖出仓位(1314.00-1314.50)'],[360,'大量卖出仓位(1298.50-1299.00)'],[468,'大量卖出仓位(1282.50-1283.00)']]},
  s2o: {kind:'order', px:3, py:4, w:515, h:514, center:180, shift:0, sym:'XAUUSD-2,H4', last:'1314.609', time:'04:55', axis:AXIS_A, dates:DATES_A, first:16,
    lines:[[218,'#ffa500',1.4],[243,'#808080',1],[450,'#1e7ff0',1],[477,'#1e7ff0',1]],
    labels:[[6,'大量卖出未结订单(1350.00-1350.50)'],[224,'大量卖出未结订单(1318.00-1318.50)'],[456,'大量买入未结订单(1284.00-1284.50)'],[483,'大量买入未结订单(1280.00-1280.50)']]},
  s2p: {kind:'pos', px:4, py:4, w:515, h:517, center:179, shift:0, sym:'XAUUSD-2,H4', last:'1314.609', time:'04:55', axis:AXIS_A2, dates:DATES_A, first:19,
    lines:[[244,'#808080',1.4],[249,'#1e7ff0',1],[252,'#1e7ff0',1],[353,'#ffa500',1.4],[462,'#ffa500',1.4]],
    labels:[[259,'大量买入仓位(1313.50-1314.00)'],[259,'大量卖出仓位(1314.00-1314.50)'],[360,'大量卖出仓位(1298.50-1299.00)'],[468,'大量卖出仓位(1282.50-1283.00)']]},
  s3o: {kind:'order', px:3, py:4, w:469, h:484, center:163, shift:46, sym:'XAUUSD,H4', last:'1314.645', time:'04:40', axis:AXIS_B, dates:DATES_B, first:19,
    lines:[[66,'#ffa500',1],[216,'#ffa500',1.4],[239,'#808080',1],[444,'#1e7ff0',1],[471,'#1e7ff0',1.2]],
    labels:[[72,'大量卖出未结订单(1340.00-1340.50)'],[222,'大量卖出未结订单(1318.00-1318.50)'],[449,'大量买入未结订单(1284.00-1284.50)'],[477,'大量买入未结订单(1280.00-1280.50)']]},
  s3p: {kind:'pos', px:4, py:4, w:469, h:484, center:163, shift:46, sym:'XAUUSD,H4', last:'1314.645', time:'04:40', axis:AXIS_B, dates:DATES_B, first:19,
    lines:[[239,'#808080',1],[246,'#1e7ff0',1.2],[248,'#1e7ff0',1.2],[346,'#ffa500',1],[454,'#ffa500',1]],
    labels:[[253,'大量买入仓位(1313.50-1314.00)'],[253,'大量卖出仓位(1314.00-1314.50)'],[352,'大量卖出仓位(1298.50-1299.00)'],[460,'大量卖出仓位(1282.50-1283.00)']]},
  s4o: {kind:'order', px:4, py:3, w:468, h:485, center:162, shift:46, sym:'XAUUSD,H4', last:'1314.482', time:'04:40', axis:AXIS_B, dates:DATES_B, first:20,
    lines:[[67,'#ffa500',1],[216,'#ffa500',1],[241,'#8a9aaa',1.4],[445,'#1e7ff0',1],[472,'#1e7ff0',1]],
    labels:[[72,'大量卖出未结订单(1340.00-1340.50)'],[222,'大量卖出未结订单(1318.00-1318.50)'],[450,'大量买入未结订单(1284.00-1284.50)'],[477,'大量买入未结订单(1280.00-1280.50)']]},
  s4p: {kind:'pos', px:4, py:4, w:468, h:484, center:163, shift:46, sym:'XAUUSD,H4', last:'1314.482', time:'04:40', axis:AXIS_B, dates:DATES_B, first:19,
    lines:[[240,'#808080',1.4],[245,'#1e7ff0',1],[248,'#1e7ff0',1],[346,'#ffa500',1],[454,'#ffa500',1]],
    labels:[[253,'大量买入仓位(1313.50-1314.00)'],[253,'大量卖出仓位(1314.00-1314.50)'],[352,'大量卖出仓位(1298.50-1299.00)'],[460,'大量卖出仓位(1282.50-1283.00)']]}
};

function el(parent, name, attrs, text) {
  const node = document.createElementNS(SVG_NS, name);
  for (const key in attrs) node.setAttribute(key, attrs[key]);
  if (text !== undefined) node.textContent = text;
  parent.appendChild(node);
  return node;
}

function label(parent, x, y, str, cls, len) {
  const attrs = {x: x, y: y, class: cls};
  if (len) {
    attrs.textLength = len;
    attrs.lengthAdjust = 'spacingAndGlyphs';
  }
  return el(parent, 'text', attrs, str);
}

// same seed for each chart, they show the same price history
function randomizer() {
  let seed = 12345;
  return () => {
    seed = (seed * 1103515245 + 12345) & 0x7fffffff;
    return seed / 0x7fffffff;
  };
}

function envelope(x) {
  for (let i = 1; i < GREEN_PATH.length; i++) {
    const a = GREEN_PATH[i - 1], b = GREEN_PATH[i];
    if (x <= b[0]) {
      const t = (x - a[0]) / (b[0] - a[0]);
      return [a[1] + (b[1] - a[1]) * t, a[2] + (b[2] - a[2]) * t];
    }
  }
  return null;
}

function drawSide(g, rows, center, dir, color, coreShare) {
  const step = 3.38;
  for (let i = 0; i < 77; i++) {
    const len = rows[i] || 0;
    const y = i * 2 * step;
    if (len) {
      el(g, 'rect', {x: dir > 0 ? center : center - len, y: y, width: len, height: step, fill: color});
    }
    const core = Math.min(len, rows[i + 1] || 0) * coreShare;
    if (core) {
      el(g, 'rect', {x: dir > 0 ? center : center - core, y: y + step, width: core, height: step, fill: color});
    }
  }
}

function drawGreen(g, c) {
  const rnd = randomizer();
  for (let x = 0; x < 513; x += 3.2) {
    const range = envelope(x);
    if (!range) break;
    const spread = range[1] - range[0];
    const mid = range[0] + spread * rnd();
    const half = spread * (0.22 + 0.3 * rnd()) + 5;
    const px = Math.round(x - c.shift);
    if (px < 0) continue;
    el(g, 'rect', {x: px, y: mid - half, width: 1.4, height: half * 2, fill: '#14ee14'});
  }
}

function drawChart(host, c) {
  const W = host.clientWidth, H = host.clientHeight;
  const svg = el(host, 'svg', {width: W, height: H});
  const clipId = 'clip-' + host.dataset.chart;
  const clip = el(el(svg, 'defs', {}), 'clipPath', {id: clipId});
  el(clip, 'rect', {x: 0, y: 0, width: c.w, height: c.h});

  const root = el(svg, 'g', {transform: `translate(${c.px} ${c.py})`});
  const g = el(root, 'g', {'clip-path': `url(#${clipId})`});

  if (c.kind === 'order') {
    drawSide(g, ORDER_SELL, c.center, -1, '#ffa500', 0.45);
    drawSide(g, ORDER_BUY, c.center, 1, '#1e90ff', 0.6);
  } else {
    drawSide(g, POS_SELL, c.center, -1, '#ffa500', 0.8);
    drawSide(g, POS_BUY, c.center, 1, '#1e90ff', 1);
  }
  for (const line of c.lines) {
    el(g, 'rect', {x: 0, y: line[0] - line[2] / 2, width: c.w, height: line[2], fill: line[1]});
  }
  drawGreen(g, c);
  el(g, 'rect', {x: c.center - 0.75, y: 0, width: 1.5, height: c.h, fill: '#fff'});
  el(g, 'rect', {x: c.w - 6, y: 0, width: 1, height: c.h, fill: '#e01010'});
  el(root, 'rect', {x: 0, y: 0, width: c.w, height: c.h, fill: 'none', stroke: '#fff'});

  // header
  el(root, 'path', {d: 'M4 5h7l-3.5 4z', fill: '#fff'});
  label(root, 15, 7, `${c.sym}  1313.522 1315.217 1312.971 ${c.last}`, 'ct', c.sym.length > 9 ? 230 : 221);
  label(root, c.w - 120, 8, 'OANDA_Orderbook2_C', 'ct', 104);
  el(root, 'circle', {cx: c.w - 10, cy: 8, r: 4.5, fill: 'none', stroke: '#fff'});
  label(root, 16, 26, `数据的时间\uFF1A 2019.03.25  ${c.time}`, 'ct-cn', 190);
  label(root, 16, 46, '买入未平仓位\uFF1A 64.1%  卖出未平仓位\uFF1A 35.9%', 'ct-cn', 258);

  // level labels
  for (const item of c.labels) {
    const lw = c.kind === 'order' ? 220 : 194;
    label(root, c.w - lw - 8, item[0], item[1], 'ct-cn', lw);
  }
  const by = c.h - 8;
  if (c.kind === 'order') {
    label(root, c.center - 84, by, '卖出未结订单', 'ct-cn', 76);
    label(root, c.center + 14, by, '买入未结订单', 'ct-cn', 76);
  } else {
    label(root, c.center - 84, by, '卖出未平仓位', 'ct-cn', 76);
    label(root, c.center + 7, by, '买入未平仓位', 'ct-cn', 77);
  }

  // price axis
  c.axis.forEach((value, i) => {
    const y = c.first + i * 33;
    el(root, 'rect', {x: c.w, y: y, width: 3, height: 1, fill: '#fff'});
    label(root, c.w + 6, y, value, 'ct', 37);
  });
  const lastY = c.lines.find(l => l[1].startsWith('#8'))[0];
  el(root, 'rect', {x: c.w + 1, y: lastY - 6, width: 47, height: 12, fill: '#fff'});
  label(root, c.w + 6, lastY, c.last, 'ct-box', 37);

  // time axis
  c.dates.forEach((value, i) => {
    const x = Math.round(i * 64.2);
    el(root, 'rect', {x: x, y: c.h, width: 1, height: 4, fill: '#fff'});
    label(root, x, c.h + 10, value, 'ct');
  });
}

document.querySelectorAll('.chart').forEach(host => {
  drawChart(host, CHARTS[host.dataset.chart]);
});
```
